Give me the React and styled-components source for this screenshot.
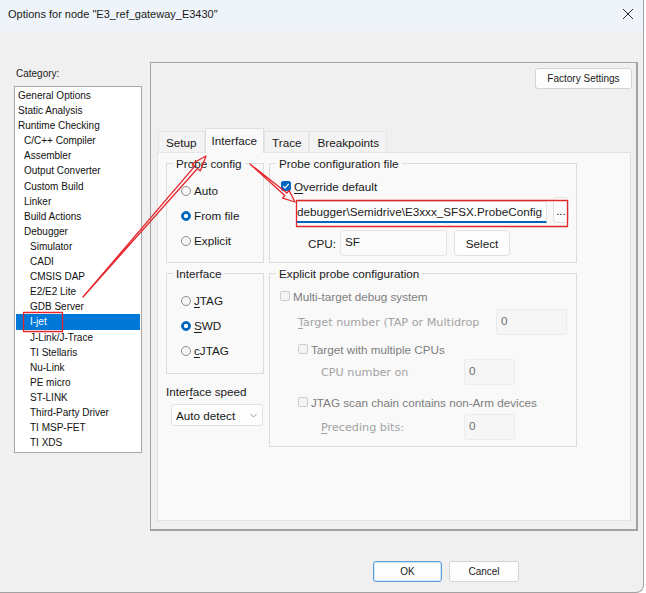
/* --------------------------------- IMPORT --------------------------------- */
import styled, { createGlobalStyle } from 'styled-components'

/* ---------------------------------- DATA ---------------------------------- */
const categories = [
  ['General Options', 0],
  ['Static Analysis', 0],
  ['Runtime Checking', 0],
  ['C/C++ Compiler', 1],
  ['Assembler', 1],
  ['Output Converter', 1],
  ['Custom Build', 1],
  ['Linker', 1],
  ['Build Actions', 1],
  ['Debugger', 1],
  ['Simulator', 2],
  ['CADI', 2],
  ['CMSIS DAP', 2],
  ['E2/E2 Lite', 2],
  ['GDB Server', 2],
  ['I-jet', 2],
  ['J-Link/J-Trace', 2],
  ['TI Stellaris', 2],
  ['Nu-Link', 2],
  ['PE micro', 2],
  ['ST-LINK', 2],
  ['Third-Party Driver', 2],
  ['TI MSP-FET', 2],
  ['TI XDS', 2],
]

const tabs = ['Setup', 'Interface', 'Trace', 'Breakpoints']

/* hollow annotation arrow, tail to tip */
const arrowPoints = (sx, sy, tx, ty, shaft, head, len) => {
  const dx = tx - sx
  const dy = ty - sy
  const d = Math.hypot(dx, dy)
  const ux = dx / d
  const uy = dy / d
  const nx = -uy
  const ny = ux
  const bx = tx - ux * len
  const by = ty - uy * len
  return [
    [sx, sy],
    [bx + nx * shaft, by + ny * shaft],
    [bx + nx * head, by + ny * head],
    [tx, ty],
    [bx - nx * head, by - ny * head],
    [bx - nx * shaft, by - ny * shaft],
  ]
    .map((p) => p.map((v) => v.toFixed(1)).join(','))
    .join(' ')
}

/* ----------------------------------- APP ---------------------------------- */
export default function App() {
  return (
    <>
      <GlobalStyles />
      <Window>
        <TitleBar>
          <TitleText>Options for node "E3_ref_gateway_E3430"</TitleText>
          <CloseIcon width='12' height='12' viewBox='0 0 12 12'>
            <path d='M1 1 L11 11 M11 1 L1 11' stroke='#2b2b2b' strokeWidth='1' />
          </CloseIcon>
        </TitleBar>

        <Main>
          <Sidebar>
            <Caption>Category:</Caption>
            <CategoryList>
              {categories.map(([name, level]) => (
                <CategoryItem key={name} $level={level} $selected={name === 'I-jet'}>
                  {name}
                </CategoryItem>
              ))}
            </CategoryList>
          </Sidebar>

          <Panel>
            <PanelHeader>
              <DialogButton $width={97}>Factory Settings</DialogButton>
            </PanelHeader>

            <TabStrip>
              {tabs.map((t) => (
                <Tab key={t} $active={t === 'Interface'}>
                  {t}
                </Tab>
              ))}
            </TabStrip>

            <TabPane>
              <PaneGrid>
                {/* Probe config */}
                <Group $height={100}>
                  <Legend>Probe config</Legend>
                  <RadioRow>
                    <Radio />
                    Auto
                  </RadioRow>
                  <RadioRow>
                    <Radio $checked />
                    From file
                  </RadioRow>
                  <RadioRow>
                    <Radio />
                    Explicit
                  </RadioRow>
                </Group>

                {/* Probe configuration file */}
                <Group $height={100}>
                  <Legend>Probe configuration file</Legend>
                  <CheckRow $indent={11}>
                    <CheckBox $checked>
                      <svg width='8' height='8' viewBox='0 0 8 8'>
                        <path d='M1.2 4.2 L3.2 6 L6.8 1.8' fill='none' stroke='#fff' strokeWidth='1.2' />
                      </svg>
                    </CheckBox>
                    <span>
                      <u>O</u>verride default
                    </span>
                  </CheckRow>
                  <FileRow>
                    <FileInput>
                      <span>debugger\Semidrive\E3xxx_SFSX.ProbeConfig</span>
                    </FileInput>
                    <SmallButton $width={16}>...</SmallButton>
                  </FileRow>
                  <FieldRow $indent={38} $top={7}>
                    <FieldLabel $width={32}>CPU:</FieldLabel>
                    <TextBox $width={107}>SF</TextBox>
                    <SmallButton $width={56} $offset={7}>
                      Select
                    </SmallButton>
                  </FieldRow>
                </Group>

                {/* Interface */}
                <LeftStack>
                  <Group $height={101}>
                    <Legend>Interface</Legend>
                    <RadioRow>
                      <Radio />
                      <span>
                        <u>J</u>TAG
                      </span>
                    </RadioRow>
                    <RadioRow>
                      <Radio $checked />
                      <span>
                        <u>S</u>WD
                      </span>
                    </RadioRow>
                    <RadioRow>
                      <Radio />
                      <span>
                        <u>c</u>JTAG
                      </span>
                    </RadioRow>
                  </Group>
                  <SpeedLabel>
                    Inter<u>f</u>ace speed
                  </SpeedLabel>
                  <Dropdown>
                    Auto detect
                    <svg width='7' height='5' viewBox='0 0 7 5'>
                      <path d='M0.5 1 L3.5 4 L6.5 1' fill='none' stroke='#8a8a8a' strokeWidth='0.9' />
                    </svg>
                  </Dropdown>
                </LeftStack>

                {/* Explicit probe configuration */}
                <Group $height={174}>
                  <Legend>Explicit probe configuration</Legend>
                  <CheckRow $indent={10} $disabled>
                    <CheckBox />
                    Multi-target debug system
                  </CheckRow>
                  <FieldRow $indent={28} $top={5}>
                    <FieldLabel $width={198} $muted>
                      <u>T</u>arget number (TAP or Multidrop
                    </FieldLabel>
                    <TextBox $width={71} $disabled>
                      0
                    </TextBox>
                  </FieldRow>
                  <CheckRow $indent={28} $top={6} $disabled>
                    <CheckBox />
                    Target with multiple CPUs
                  </CheckRow>
                  <FieldRow $indent={51} $top={2}>
                    <FieldLabel $width={143} $muted>
                      CPU number on
                    </FieldLabel>
                    <TextBox $width={51} $disabled>
                      0
                    </TextBox>
                  </FieldRow>
                  <CheckRow $indent={28} $top={9} $disabled>
                    <CheckBox />
                    JTAG scan chain contains non-Arm devices
                  </CheckRow>
                  <FieldRow $indent={51} $top={4}>
                    <FieldLabel $width={143} $muted>
                      <u>P</u>receding bits:
                    </FieldLabel>
                    <TextBox $width={51} $disabled>
                      0
                    </TextBox>
                  </FieldRow>
                </Group>
              </PaneGrid>
            </TabPane>
          </Panel>
        </Main>

        <Footer>
          <DialogButton $width={69} $default>
            OK
          </DialogButton>
          <DialogButton $width={70}>Cancel</DialogButton>
        </Footer>

        {/* red markup drawn over the dialog */}
        <Markup width='646' height='593' viewBox='0 0 646 593'>
          <g fill='none' stroke='#e5262a' strokeWidth='1.3' strokeLinejoin='round'>
            <rect x='207.5' y='131.5' width='51' height='20.5' />
            <rect x='23.5' y='312.5' width='39' height='19' />
            <rect x='296.5' y='200.5' width='271' height='26' />
            <polygon points={arrowPoints(83, 297, 206, 156, 1.8, 5.5, 15)} />
            <polygon points={arrowPoints(250, 164, 295, 202, 1.6, 5, 12)} />
          </g>
        </Markup>
      </Window>
    </>
  )
}

/* --------------------------------- STYLES --------------------------------- */
const GlobalStyles = createGlobalStyle`
  html, body {
    margin: 0;
    padding: 0;
    background: #ffffff;
  }

  body {
    font-family: 'Liberation Sans', Arial, sans-serif;
    color: #1b1b1b;
  }

  * {
    box-sizing: border-box;
  }

  u {
    text-decoration-thickness: 1px;
    text-underline-offset: 2px;
  }
`

/* WINDOW */
const Window = styled.div`
  position: relative;

  overflow: hidden;

  width: 644px;
  height: 593px;

  background: #f0f0f0;
  border-right: 1px solid #a2a2a2;
  border-bottom: 1px solid #a2a2a2;
  border-bottom-right-radius: 8px;
`

const TitleBar = styled.div`
  display: flex;
  justify-content: space-between;
  align-items: flex-start;

  height: 31px;
  padding: 0 9px 0 8px;

  background: #eef4f9;
`

const TitleText = styled.div`
  font-size: 11px;
  line-height: 28px;
  color: #1a1a1a;
`

const CloseIcon = styled.svg`
  margin-top: 8px;
`

const Main = styled.div`
  display: flex;
  gap: 8px;

  padding: 31px 0 0 14px;
`

/* CATEGORY LIST */
const Sidebar = styled.div`
  display: flex;
  flex-direction: column;

  width: 128px;
`

const Caption = styled.div`
  margin-top: 5px;
  padding-left: 2px;

  font-size: 10px;
  line-height: 14px;
`

const CategoryList = styled.div`
  height: 367px;
  margin-top: 5px;
  padding: 1px 1px 0;

  background: #ffffff;
  border: 1px solid #a7a7a7;
`

const CategoryItem = styled.div`
  height: 15.1px;
  padding-left: ${({ $level }) => 2 + $level * 6}px;

  font-size: 10px;
  line-height: 15.1px;
  white-space: nowrap;
  color: ${({ $selected }) => ($selected ? '#ffffff' : '#111111')};

  background: ${({ $selected }) => ($selected ? '#0078d7' : 'transparent')};
`

/* OPTIONS PANEL */
const Panel = styled.div`
  display: flex;
  flex-direction: column;

  width: 488px;
  height: 469px;
  padding: 0 5px 0 6px;

  border: 1px solid #a3a3a3;
  border-right-width: 2px;
  border-bottom-width: 2px;
`

const PanelHeader = styled.div`
  display: flex;
  justify-content: flex-end;

  margin: 5px -1px 0 0;
`

const DialogButton = styled.button`
  width: ${({ $width }) => $width}px;
  height: 21px;
  padding: 0;

  font-family: 'Liberation Sans', Arial, sans-serif;
  font-size: 10px;
  color: #1a1a1a;

  background: #fdfdfd;
  border: 1px solid ${({ $default }) => ($default ? '#5a9fdc' : '#d4d4d4')};
  border-radius: 3px;
  box-shadow: ${({ $default }) => ($default ? 'inset 0 0 0 1px #d3e6f7' : 'none')};
`

/* TABS */
const TabStrip = styled.div`
  display: flex;
  align-items: flex-end;

  height: 24px;
  margin-top: 39px;
  padding-left: 1px;
`

const Tab = styled.div`
  position: relative;
  z-index: ${({ $active }) => ($active ? 1 : 0)};

  height: ${({ $active }) => ($active ? 25 : 22)}px;
  margin-bottom: -1px;
  padding: 0 ${({ $active }) => ($active ? 6 : 7)}px;

  font-size: 11.7px;
  line-height: ${({ $active }) => ($active ? 23 : 21)}px;
  color: #1a1a1a;

  background: ${({ $active }) => ($active ? '#f9f9f9' : '#f3f3f3')};
  border: 1px solid ${({ $active }) => ($active ? '#dedede' : '#e6e6e6')};
  border-bottom: ${({ $active }) => ($active ? 'none' : '1px solid #e6e6e6')};
`

const TabPane = styled.div`
  height: 369px;

  background: #f9f9f9;
  border: 1px solid #e2e2e2;
`

const PaneGrid = styled.div`
  display: grid;
  grid-template-columns: 98px 308px;
  align-items: start;
  column-gap: 5px;
  row-gap: 10px;

  padding: 10px 0 0 8px;

  font-size: 11.7px;
`

const LeftStack = styled.div`
  display: flex;
  flex-direction: column;
`

/* GROUP BOXES */
const Group = styled.div`
  position: relative;

  display: flex;
  flex-direction: column;

  height: ${({ $height }) => $height}px;
  padding-top: 14px;

  border: 1px solid #dcdcdc;
`

const Legend = styled.span`
  position: absolute;
  top: -8px;
  left: 6px;

  padding: 0 3px;

  font-size: 11.7px;
  line-height: 15px;
  white-space: nowrap;
  color: #1a1a1a;

  background: #f9f9f9;
`

const RadioRow = styled.div`
  display: flex;
  align-items: center;
  gap: 3px;

  height: 25px;
  padding-left: 14px;

  color: #1a1a1a;
`

const Radio = styled.span`
  flex: none;

  width: 10px;
  height: 10px;

  border-radius: 50%;
  border: 1px solid ${({ $checked }) => ($checked ? '#0067c0' : '#8f8f8f')};
  background: ${({ $checked }) =>
    $checked ? 'radial-gradient(circle, #ffffff 0 1.8px, #0067c0 2.4px)' : '#f6f6f6'};
`

const CheckRow = styled.div`
  display: flex;
  align-items: center;
  gap: 3px;

  height: 16px;
  margin-top: ${({ $top }) => $top || 0}px;
  padding-left: ${({ $indent }) => $indent}px;

  white-space: nowrap;
  color: ${({ $disabled }) => ($disabled ? '#7d7d7d' : '#1a1a1a')};
`

const CheckBox = styled.span`
  flex: none;

  display: flex;
  justify-content: center;
  align-items: center;

  width: 10px;
  height: 10px;

  border-radius: 2px;
  border: 1px solid ${({ $checked }) => ($checked ? '#0067c0' : '#cdcdcd')};
  background: ${({ $checked }) => ($checked ? '#0067c0' : '#f4f4f4')};
`

/* FIELDS */
const FileRow = styled.div`
  display: flex;
  align-items: flex-end;
  gap: 6px;

  height: 26px;
  margin-top: 3px;
  padding-left: 26px;
`

const FileInput = styled.div`
  display: flex;
  justify-content: flex-end;
  align-items: center;

  overflow: hidden;

  width: 251px;
  height: 22px;
  padding: 0 4px 0 1px;

  white-space: nowrap;
  color: #1a1a1a;

  background: #ffffff;
  border: 1px solid #e3e3e3;
  border-bottom: 2px solid #0067c0;
  border-radius: 3px 3px 0 0;
`

const SmallButton = styled.button`
  flex: none;

  width: ${({ $width }) => $width}px;
  height: 26px;
  margin-left: ${({ $offset }) => $offset || 0}px;
  padding: 0;

  font-family: 'Liberation Sans', Arial, sans-serif;
  font-size: 11.7px;
  color: #1a1a1a;

  background: #fdfdfd;
  border: 1px solid #e0e0e0;
  border-radius: 4px;
`

const FieldRow = styled.div`
  display: flex;
  align-items: center;

  height: 26px;
  margin-top: ${({ $top }) => $top}px;
  padding-left: ${({ $indent }) => $indent}px;
`

const FieldLabel = styled.span`
  flex: none;

  width: ${({ $width }) => $width}px;

  white-space: nowrap;
  font-family: ${({ $muted }) => ($muted ? "'DejaVu Sans', Verdana, sans-serif" : 'inherit')};
  font-size: ${({ $muted }) => ($muted ? '11.2px' : 'inherit')};
  color: ${({ $muted }) => ($muted ? '#a3a3a3' : '#1a1a1a')};
`

const TextBox = styled.div`
  flex: none;

  width: ${({ $width }) => $width}px;
  height: 26px;
  padding: 4px 4px 0;

  line-height: 14px;
  color: ${({ $disabled }) => ($disabled ? '#707070' : '#1a1a1a')};

  background: ${({ $disabled }) => ($disabled ? '#f6f6f6' : '#fbfbfb')};
  border: 1px solid ${({ $disabled }) => ($disabled ? '#ececec' : '#e6e6e6')};
  border-radius: 3px;
`

const SpeedLabel = styled.div`
  margin-top: 11px;

  line-height: 14px;
  white-space: nowrap;
  color: #1a1a1a;
`

const Dropdown = styled.div`
  display: flex;
  justify-content: space-between;
  align-items: center;

  width: 92px;
  height: 22px;
  margin: 5px 0 0 5px;
  padding: 0 5px 0 4px;

  color: #1a1a1a;

  background: #fdfdfd;
  border: 1px solid #e2e2e2;
  border-radius: 3px;
`

/* FOOTER */
const Footer = styled.div`
  display: flex;
  justify-content: flex-end;
  gap: 7px;

  margin-top: 30px;
  padding-right: 124px;
`

/* ANNOTATIONS */
const Markup = styled.svg`
  position: absolute;
  top: 0;
  left: 0;

  pointer-events: none;
`
